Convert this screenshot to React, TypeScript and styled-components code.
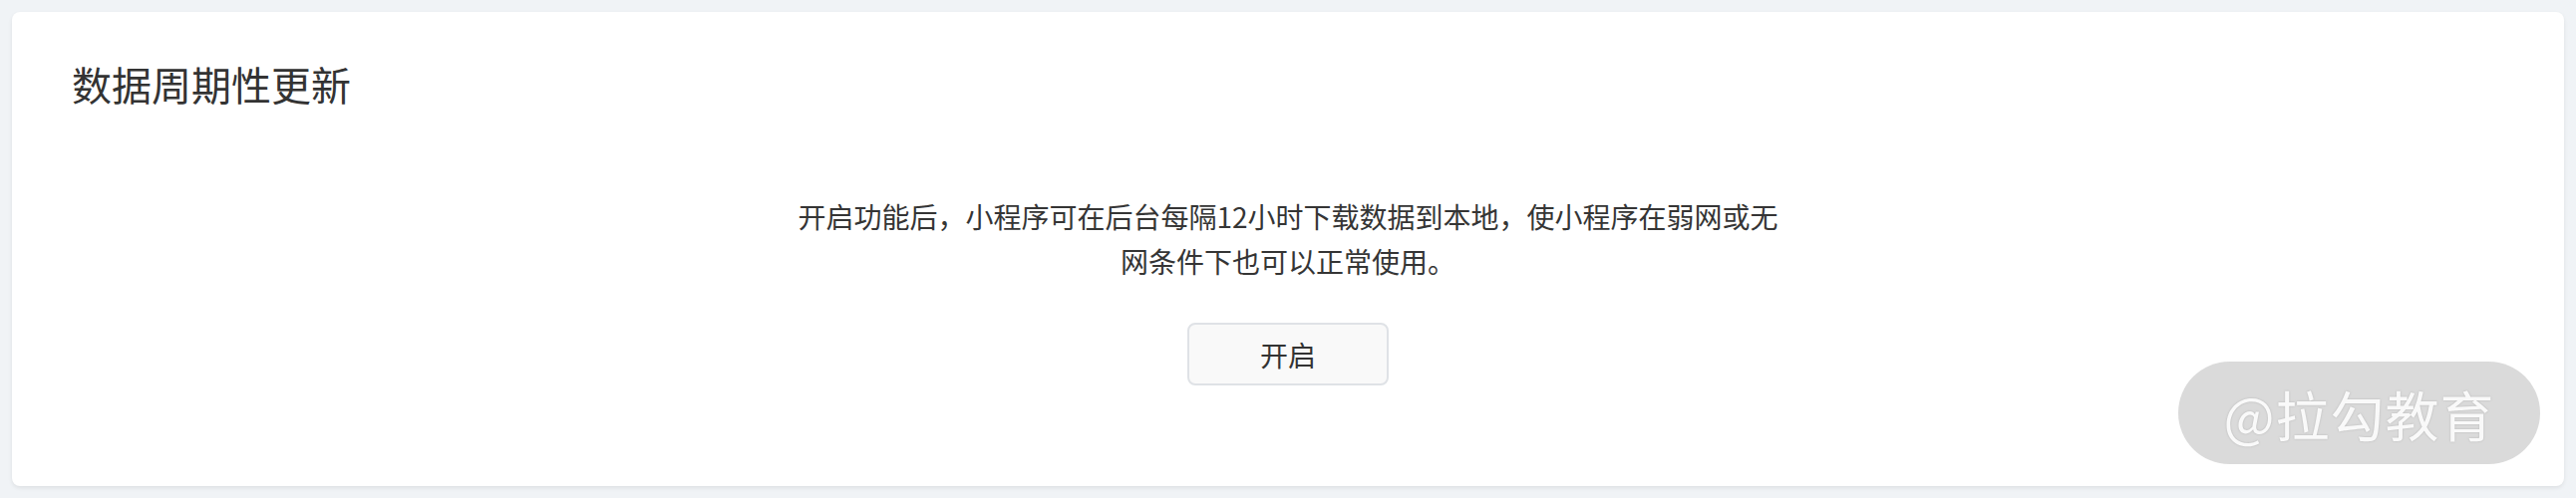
import React from "react";
import styled, { createGlobalStyle } from "styled-components";

const GlobalStyle = createGlobalStyle`
  html, body {
    margin: 0;
    padding: 0;
    background: #f0f3f6;
  }
  body {
    font-family: "Noto Sans CJK SC", "Noto Sans", sans-serif;
    color: #333333;
  }
`;

const Page = styled.div`
  padding: 12px;
  box-sizing: border-box;
  height: 500px;
  overflow: hidden;
`;

const Card = styled.section`
  position: relative;
  background: #ffffff;
  border-radius: 8px;
  box-shadow: 0 2px 4px rgba(0, 0, 0, 0.08);
  height: 476px;
  box-sizing: border-box;
  padding: 44px 60px 0 60px;
  display: flex;
  flex-direction: column;
`;

const Title = styled.h2`
  margin: 0;
  font-size: 40px;
  line-height: 56px;
  font-weight: 400;
  color: #333333;
`;

const Body = styled.div`
  display: flex;
  flex-direction: column;
  align-items: center;
  padding-top: 83px;
`;

const Desc = styled.p`
  margin: 0;
  width: 1000px;
  font-size: 28px;
  line-height: 45px;
  text-align: center;
  color: #353535;
`;

const Button = styled.button`
  margin-top: 39px;
  width: 202px;
  height: 63px;
  box-sizing: border-box;
  border: 2px solid #dfe2e6;
  border-radius: 8px;
  background: #f9f9f9;
  font-family: "Noto Sans CJK SC", sans-serif;
  font-size: 28px;
  color: #333333;
  cursor: pointer;
  padding: 0;
`;

const Watermark = styled.div`
  position: absolute;
  right: 24px;
  bottom: 22px;
  width: 363px;
  height: 103px;
  border-radius: 52px;
  background: rgba(200, 200, 200, 0.68);
  display: flex;
  align-items: center;
  justify-content: center;
  font-family: "Noto Sans CJK SC", sans-serif;
  font-size: 54px;
  font-weight: 400;
  color: rgba(255, 255, 255, 0.92);
  text-shadow: 0 0 2px rgba(150, 150, 150, 0.6);
  letter-spacing: 1px;
  padding-top: 2px;
  box-sizing: border-box;
`;

export default function App() {
  return (
    <>
      <GlobalStyle />
      <Page>
        <Card>
          <Title>数据周期性更新</Title>
          <Body>
            <Desc>
              开启功能后，小程序可在后台每隔12小时下载数据到本地，使小程序在弱网或无网条件下也可以正常使用。
            </Desc>
            <Button type="button">开启</Button>
          </Body>
          <Watermark>@拉勾教育</Watermark>
        </Card>
      </Page>
    </>
  );
}
